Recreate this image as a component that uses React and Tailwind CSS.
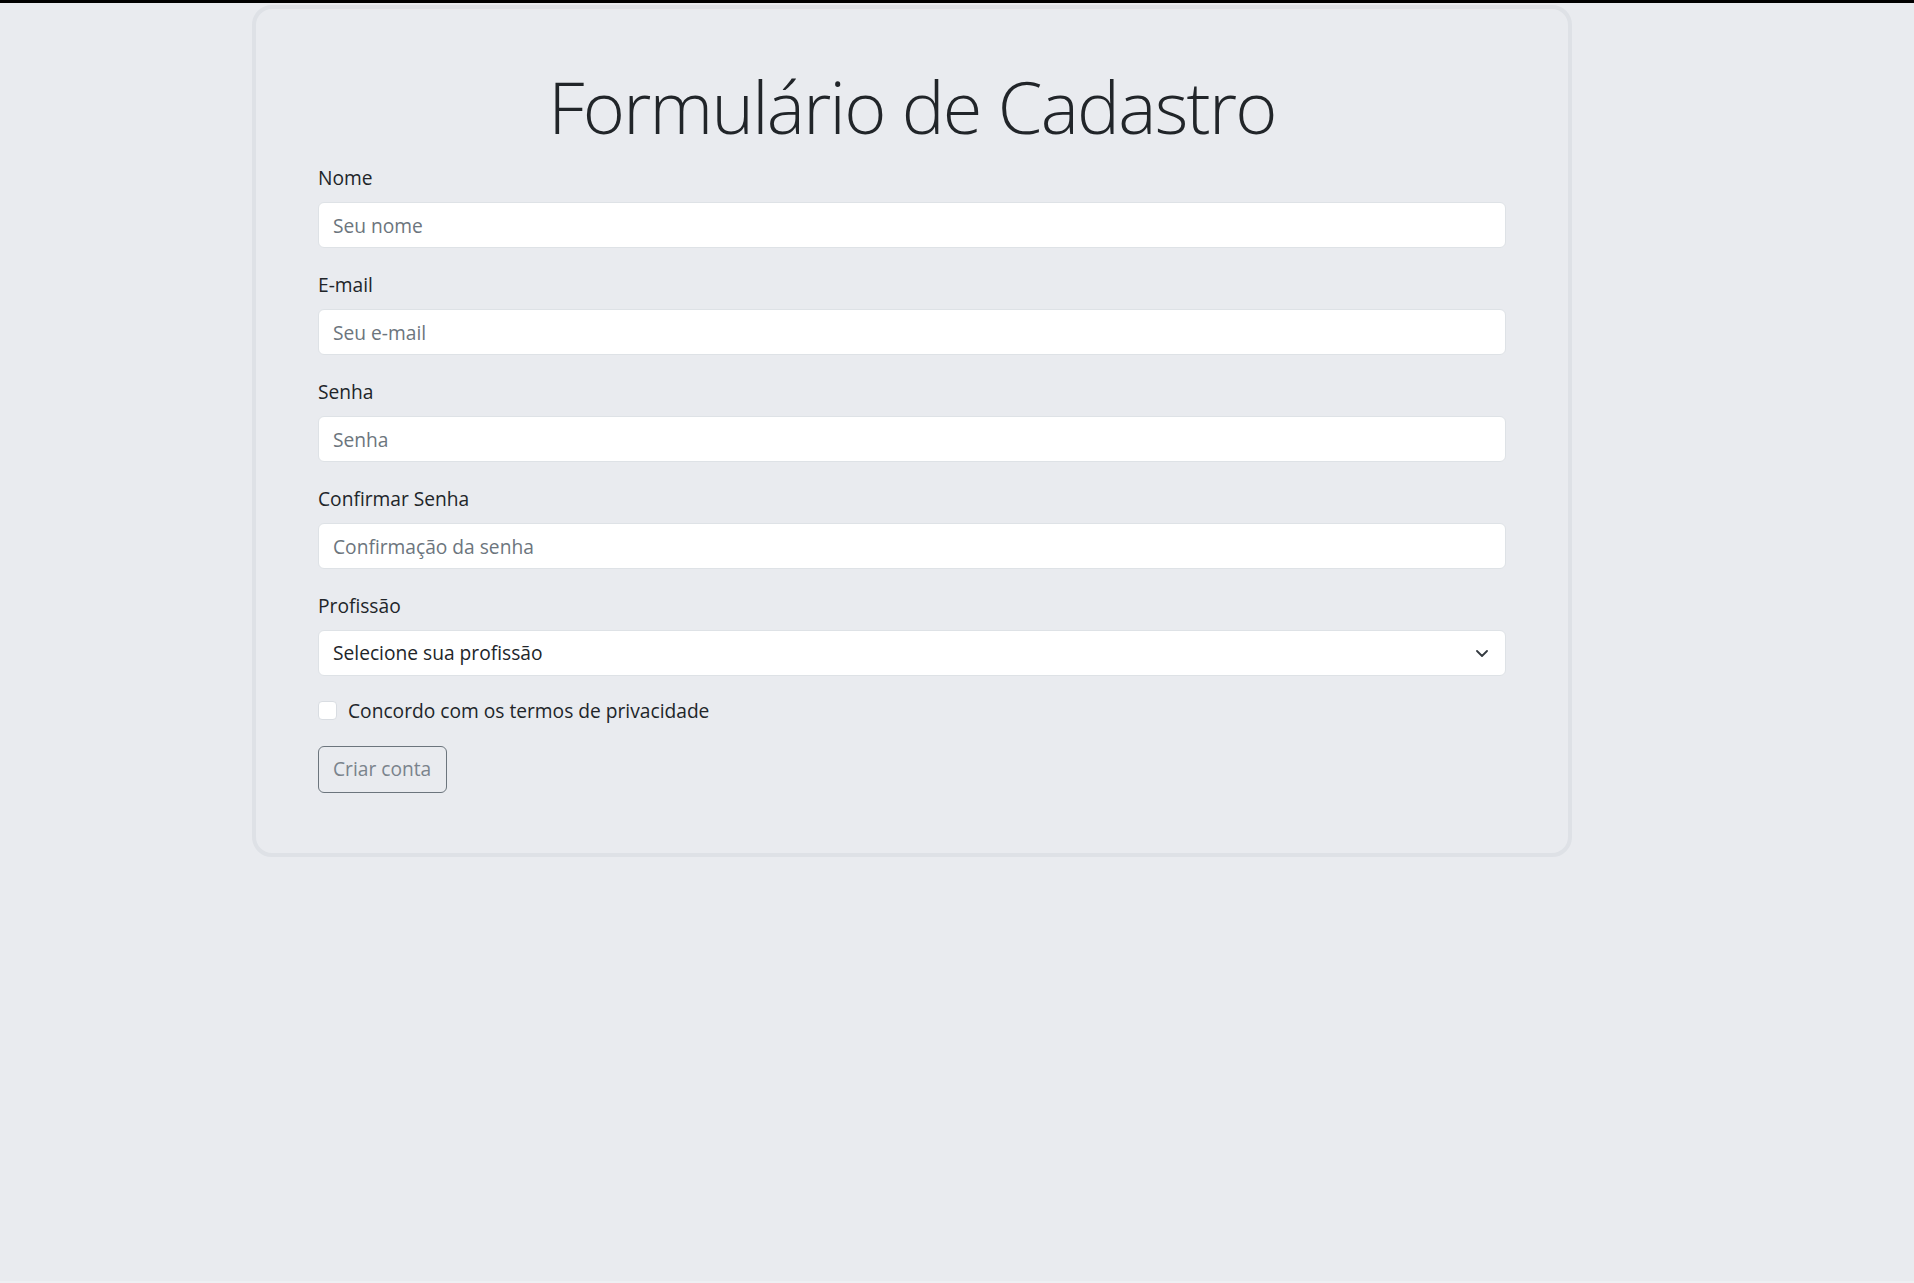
import React from "react";

function Field({ label, placeholder, type = "text" }) {
  return (
    <div className="mb-[22px]">
      <label className="block h-[29px] leading-[29px] mb-[10px] text-[19.2px] text-[#212529]">{label}</label>
      <input
        type={type}
        placeholder={placeholder}
        className="block w-full h-[46px] px-[14px] bg-white border border-[#dee2e6] rounded-[6px] text-[19.2px] text-[#212529] placeholder:text-[#6c757d] outline-none"
      />
    </div>
  );
}

export default function App() {
  return (
    <div className="min-h-screen bg-[#e9ebef] font-['Open_Sans','Noto_Sans',sans-serif] flex flex-col">
      <div className="h-[3px] bg-black" />
      <div className="pt-[2px] pl-[252px] flex-1">
        <form
          onSubmit={(e) => e.preventDefault()}
          className="w-[1320px] border-4 border-[#dee1e6] rounded-[20px] px-[62px] pt-[54px] pb-[60px]"
        >
          <h1 className="text-center text-[72px] leading-[86px] font-light tracking-[-1.7px] text-[#212529] mb-[14px]">
            Formulário de Cadastro
          </h1>
          <Field label="Nome" placeholder="Seu nome" />
          <Field label="E-mail" placeholder="Seu e-mail" type="email" />
          <Field label="Senha" placeholder="Senha" type="password" />
          <Field label="Confirmar Senha" placeholder="Confirmação da senha" type="password" />
          <div className="mb-[20px]">
            <label className="block h-[29px] leading-[29px] mb-[10px] text-[19.2px] text-[#212529]">Profissão</label>
            <div className="relative h-[46px] bg-white border border-[#dee2e6] rounded-[6px] flex items-center px-[14px] text-[19.2px] text-[#212529]">
              <span>Selecione sua profissão</span>
              <svg className="absolute right-[17px] top-[19px]" width="12" height="7" viewBox="0 0 12 7" fill="none">
                <path d="M1 1l5 5 5-5" stroke="#343a40" strokeWidth="1.8" strokeLinecap="round" strokeLinejoin="round" />
              </svg>
            </div>
          </div>
          <div className="h-[29px] flex items-center gap-[11px] mb-[21px]">
            <span className="w-[19px] h-[19px] bg-white border border-[#d9dde2] rounded-[4px]" />
            <span className="text-[19.2px] leading-[29px] text-[#212529]">Concordo com os termos de privacidade</span>
          </div>
          <button
            type="submit"
            className="h-[47px] w-[129px] border border-[#6c757d] rounded-[6px] text-[19.2px] text-[#7a838c] text-left px-[14px]"
          >
            Criar conta
          </button>
        </form>
      </div>
      <div className="h-[2px] bg-[#eef0f3]" />
    </div>
  );
}
